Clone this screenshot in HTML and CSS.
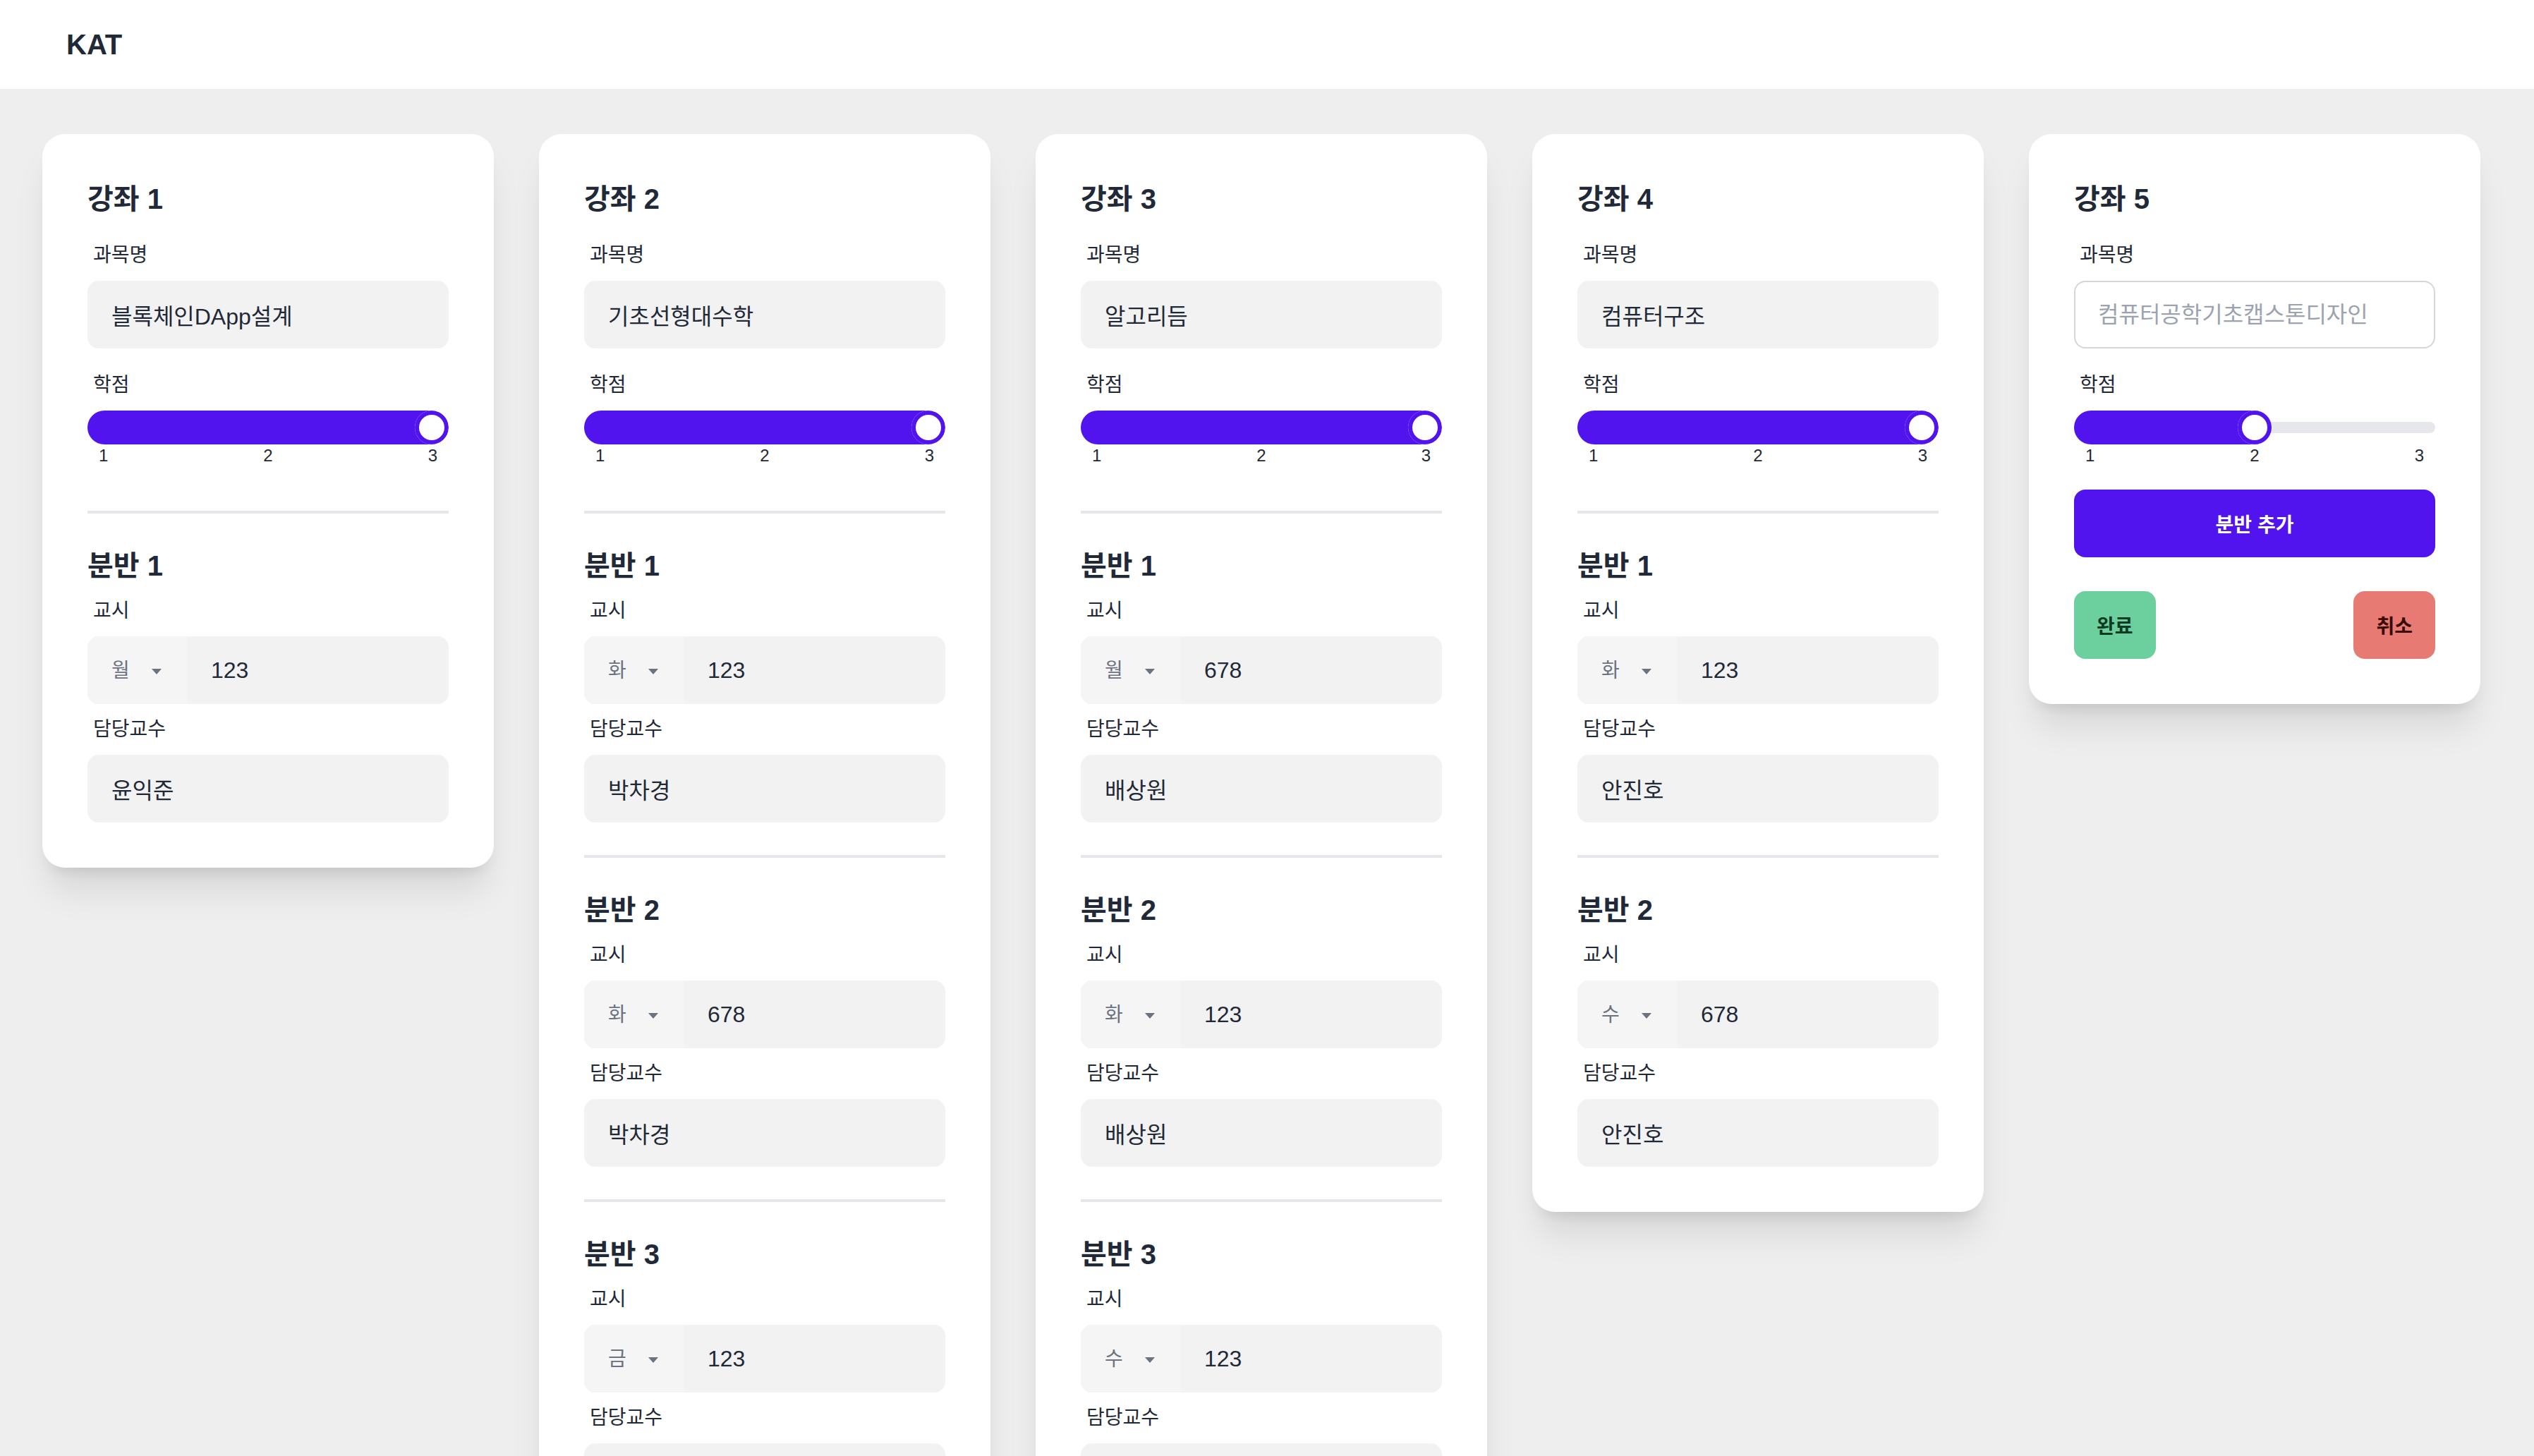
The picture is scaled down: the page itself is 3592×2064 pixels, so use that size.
FILE: index.html
```html
<!DOCTYPE html>
<html lang="ko">
<head>
<meta charset="utf-8">
<title>KAT</title>
<link rel="stylesheet" href="styles.css">
</head>
<body>
<header class="topbar">
  <span class="brand">KAT</span>
</header>
<main class="board">

  <section class="card">
    <h2 class="card-title">강좌 1</h2>
    <div class="field">
      <label class="field-label">과목명</label>
      <input class="text-input" type="text" value="블록체인DApp설계">
    </div>
    <div class="field">
      <label class="field-label">학점</label>
      <input class="range" type="range" min="1" max="3" value="3">
      <div class="steps"><span>1</span><span>2</span><span>3</span></div>
    </div>
    <div class="division">
      <hr class="divider">
      <h3 class="division-title">분반 1</h3>
      <label class="field-label">교시</label>
      <div class="join">
        <div class="day-select"><select><option>월</option></select></div>
        <input class="join-input" type="text" value="123">
      </div>
      <label class="field-label">담당교수</label>
      <input class="text-input" type="text" value="윤익준">
    </div>
  </section>

  <section class="card">
    <h2 class="card-title">강좌 2</h2>
    <div class="field">
      <label class="field-label">과목명</label>
      <input class="text-input" type="text" value="기초선형대수학">
    </div>
    <div class="field">
      <label class="field-label">학점</label>
      <input class="range" type="range" min="1" max="3" value="3">
      <div class="steps"><span>1</span><span>2</span><span>3</span></div>
    </div>
    <div class="division">
      <hr class="divider">
      <h3 class="division-title">분반 1</h3>
      <label class="field-label">교시</label>
      <div class="join">
        <div class="day-select"><select><option>화</option></select></div>
        <input class="join-input" type="text" value="123">
      </div>
      <label class="field-label">담당교수</label>
      <input class="text-input" type="text" value="박차경">
    </div>
    <div class="division">
      <hr class="divider">
      <h3 class="division-title">분반 2</h3>
      <label class="field-label">교시</label>
      <div class="join">
        <div class="day-select"><select><option>화</option></select></div>
        <input class="join-input" type="text" value="678">
      </div>
      <label class="field-label">담당교수</label>
      <input class="text-input" type="text" value="박차경">
    </div>
    <div class="division">
      <hr class="divider">
      <h3 class="division-title">분반 3</h3>
      <label class="field-label">교시</label>
      <div class="join">
        <div class="day-select"><select><option>금</option></select></div>
        <input class="join-input" type="text" value="123">
      </div>
      <label class="field-label">담당교수</label>
      <input class="text-input" type="text" value="박차경">
    </div>
  </section>

  <section class="card">
    <h2 class="card-title">강좌 3</h2>
    <div class="field">
      <label class="field-label">과목명</label>
      <input class="text-input" type="text" value="알고리듬">
    </div>
    <div class="field">
      <label class="field-label">학점</label>
      <input class="range" type="range" min="1" max="3" value="3">
      <div class="steps"><span>1</span><span>2</span><span>3</span></div>
    </div>
    <div class="division">
      <hr class="divider">
      <h3 class="division-title">분반 1</h3>
      <label class="field-label">교시</label>
      <div class="join">
        <div class="day-select"><select><option>월</option></select></div>
        <input class="join-input" type="text" value="678">
      </div>
      <label class="field-label">담당교수</label>
      <input class="text-input" type="text" value="배상원">
    </div>
    <div class="division">
      <hr class="divider">
      <h3 class="division-title">분반 2</h3>
      <label class="field-label">교시</label>
      <div class="join">
        <div class="day-select"><select><option>화</option></select></div>
        <input class="join-input" type="text" value="123">
      </div>
      <label class="field-label">담당교수</label>
      <input class="text-input" type="text" value="배상원">
    </div>
    <div class="division">
      <hr class="divider">
      <h3 class="division-title">분반 3</h3>
      <label class="field-label">교시</label>
      <div class="join">
        <div class="day-select"><select><option>수</option></select></div>
        <input class="join-input" type="text" value="123">
      </div>
      <label class="field-label">담당교수</label>
      <input class="text-input" type="text" value="배상원">
    </div>
  </section>

  <section class="card">
    <h2 class="card-title">강좌 4</h2>
    <div class="field">
      <label class="field-label">과목명</label>
      <input class="text-input" type="text" value="컴퓨터구조">
    </div>
    <div class="field">
      <label class="field-label">학점</label>
      <input class="range" type="range" min="1" max="3" value="3">
      <div class="steps"><span>1</span><span>2</span><span>3</span></div>
    </div>
    <div class="division">
      <hr class="divider">
      <h3 class="division-title">분반 1</h3>
      <label class="field-label">교시</label>
      <div class="join">
        <div class="day-select"><select><option>화</option></select></div>
        <input class="join-input" type="text" value="123">
      </div>
      <label class="field-label">담당교수</label>
      <input class="text-input" type="text" value="안진호">
    </div>
    <div class="division">
      <hr class="divider">
      <h3 class="division-title">분반 2</h3>
      <label class="field-label">교시</label>
      <div class="join">
        <div class="day-select"><select><option>수</option></select></div>
        <input class="join-input" type="text" value="678">
      </div>
      <label class="field-label">담당교수</label>
      <input class="text-input" type="text" value="안진호">
    </div>
  </section>

  <section class="card">
    <h2 class="card-title">강좌 5</h2>
    <div class="field">
      <label class="field-label">과목명</label>
      <input class="text-input bordered" type="text" placeholder="컴퓨터공학기초캡스톤디자인">
    </div>
    <div class="field">
      <label class="field-label">학점</label>
      <input class="range" type="range" min="1" max="3" value="2">
      <div class="steps"><span>1</span><span>2</span><span>3</span></div>
    </div>
    <button class="btn btn-primary" type="button">분반 추가</button>
    <div class="actions">
      <button class="btn btn-done" type="button">완료</button>
      <button class="btn btn-cancel" type="button">취소</button>
    </div>
  </section>

</main>
</body>
</html>
```

FILE: styles.css
```css
* {
  box-sizing: border-box;
}

html,
body {
  margin: 0;
  padding: 0;
}

body {
  background: #eeeeee;
  color: #1f2937;
  font-family: "Liberation Sans", "Noto Sans CJK KR", sans-serif;
  font-feature-settings: "palt";
}

.topbar {
  height: 126px;
  background: #ffffff;
  display: flex;
  align-items: center;
  padding-left: 94px;
}

.brand {
  font-size: 40px;
  font-weight: 700;
  color: #1f2937;
}

.board {
  display: flex;
  align-items: flex-start;
  gap: 64px;
  padding: 64px 60px;
}

.card {
  flex: none;
  width: 640px;
  background: #ffffff;
  border-radius: 32px;
  padding: 64px;
  box-shadow: 0 40px 50px -10px rgba(0, 0, 0, 0.1), 0 16px 20px -12px rgba(0, 0, 0, 0.1);
}

.card-title,
.division-title {
  margin: 0;
  font-size: 40px;
  line-height: 56px;
  font-weight: 700;
  color: #1f2937;
}

.card-title {
  margin-bottom: 16px;
}

.field + .field {
  margin-top: 16px;
}

.field-label {
  display: block;
  padding: 16px 8px;
  font-size: 28px;
  line-height: 40px;
  color: #1f2937;
}

.text-input {
  display: block;
  width: 100%;
  height: 96px;
  margin: 0;
  padding: 0 32px;
  border: 2px solid transparent;
  border-radius: 16px;
  background: #f2f2f2;
  font-family: inherit;
  font-feature-settings: "palt";
  font-size: 32px;
  color: #1f2937;
  outline: none;
}

.text-input.bordered {
  background: #ffffff;
  border-color: #d4d6da;
}

.text-input::placeholder {
  color: #9ca3af;
}

.range {
  -webkit-appearance: none;
  appearance: none;
  display: block;
  width: 100%;
  height: 48px;
  margin: 0;
  padding: 0;
  background: transparent;
  overflow: hidden;
  border-radius: 32px;
  cursor: pointer;
}

.range::-webkit-slider-runnable-track {
  height: 16px;
  width: 100%;
  border-radius: 32px;
  background: #e5e7eb;
}

.range::-webkit-slider-thumb {
  -webkit-appearance: none;
  appearance: none;
  position: relative;
  top: 50%;
  transform: translateY(-50%);
  width: 48px;
  height: 48px;
  border: none;
  border-radius: 32px;
  background: #ffffff;
  box-shadow: 0 0 0 6px #5114ee inset, -4019px 0 0 4000px #5114ee;
}

.steps {
  display: flex;
  justify-content: space-between;
  padding: 0 16px;
  font-size: 24px;
  line-height: 32px;
  color: #1f2937;
}

.divider {
  margin: 46px 0 0;
  height: 4px;
  border: none;
  background: #e5e7eb;
}

.card > .field + .division > .divider {
  margin-top: 62px;
}

.division-title {
  margin-top: 46px;
}

.join {
  display: flex;
  height: 96px;
  border-radius: 16px;
  overflow: hidden;
  background: #f2f2f2;
}

.day-select {
  position: relative;
  flex: none;
  width: 141px;
  background: #f5f5f5;
}

.day-select select {
  -webkit-appearance: none;
  appearance: none;
  width: 100%;
  height: 100%;
  margin: 0;
  padding: 0 0 0 34px;
  border: none;
  background: transparent;
  font-family: inherit;
  font-size: 28px;
  color: #6b7280;
  outline: none;
}

.day-select::after {
  content: "";
  position: absolute;
  left: 91px;
  top: 46px;
  border-left: 7px solid transparent;
  border-right: 7px solid transparent;
  border-top: 8px solid #6b7280;
  pointer-events: none;
}

.join-input {
  flex: 1;
  min-width: 0;
  height: 100%;
  margin: 0;
  padding: 0 34px;
  border: none;
  background: #f2f2f2;
  font-family: inherit;
  font-size: 32px;
  color: #1f2937;
  outline: none;
}

.btn {
  height: 96px;
  margin: 0;
  padding: 0 32px;
  border: none;
  border-radius: 16px;
  font-family: inherit;
  font-feature-settings: "palt";
  font-size: 28px;
  font-weight: 700;
  cursor: pointer;
}

.btn-primary {
  display: block;
  width: 100%;
  margin-top: 32px;
  background: #5114ee;
  color: #ffffff;
}

.actions {
  display: flex;
  justify-content: space-between;
  margin-top: 48px;
}

.btn-done {
  background: #6bd09e;
  color: #0f3a22;
}

.btn-cancel {
  background: #e77b74;
  color: #3a0a07;
}
```
